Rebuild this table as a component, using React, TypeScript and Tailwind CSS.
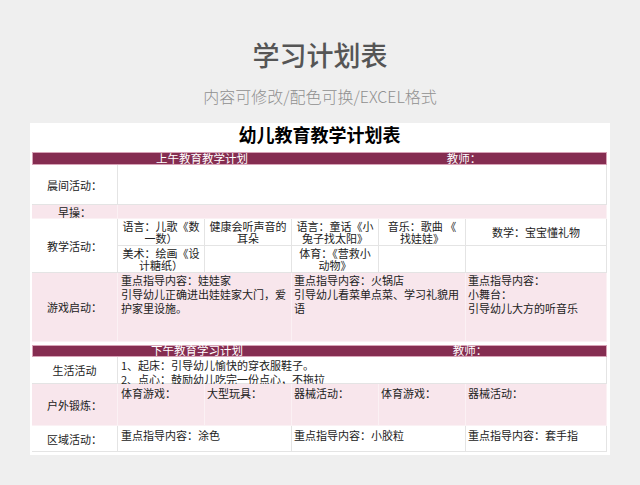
import React from 'react';

const font = { fontFamily: '"Noto Sans CJK SC", "Noto Sans", sans-serif' };

const pink = 'bg-[#f8e6ec] border-[#fbf1f4]';
const white = 'bg-white border-[#e4e4e4]';

function Cell({
  className = '',
  tone = 'white',
  children,
}: {
  className?: string;
  tone?: 'white' | 'pink';
  children?: React.ReactNode;
}) {
  return (
    <div className={`border-r border-b ${tone === 'pink' ? pink : white} ${className}`}>
      {children}
    </div>
  );
}

function Label({ text, tone = 'white', className = '' }: { text: string; tone?: 'white' | 'pink'; className?: string }) {
  return (
    <Cell tone={tone} className={`flex items-center justify-center ${className}`}>
      <span>{text}</span>
    </Cell>
  );
}

function Lines({ lines, className = '' }: { lines: string[]; className?: string }) {
  return (
    <div className={className}>
      {lines.map((l, i) => (
        <div key={i} className="whitespace-nowrap">
          {l}
        </div>
      ))}
    </div>
  );
}

function HeaderBar({ left, leftW, rightW }: { left: string; leftW: string; rightW: string }) {
  return (
    <div className="flex h-full items-center bg-[#852d51] border border-[#d7a3b7] text-white text-[11.5px] leading-none">
      <div className={`${leftW} text-center`}>{left}</div>
      <div className={`${rightW} text-center`}>教师：</div>
    </div>
  );
}

export default function App() {
  const cols = 'grid grid-cols-[86px_87px_87px_87px_87px_141px]';
  return (
    <div className="min-h-[485px] bg-[#efefef] flex flex-col items-center" style={font}>
      <h1 className="mt-[40px] text-[27px] leading-[30px] font-medium text-[#555555]">学习计划表</h1>
      <p className="mt-[16px] text-[16px] leading-[20px] font-light text-[#8f8f8f]">内容可修改/配色可换/EXCEL格式</p>

      <div className="mt-[17px] w-[580px] bg-white pl-[2px] pr-[3px] pb-[3px] text-[11px] text-[#222222]">
        <div className="h-[29px] text-center text-[18px] leading-[22px] font-bold text-black">幼儿教育教学计划表</div>

        <div className="h-[13px]">
          <HeaderBar left="上午教育教学计划" leftW="w-[338px]" rightW="w-[186px]" />
        </div>

        <div className={`${cols} grid-rows-[40px_14px_27px_27px_69px] leading-[12px]`}>
          <Label text="晨间活动：" />
          <Cell className="col-span-5" />

          <Label text="早操：" tone="pink" />
          <Cell tone="pink" className="col-span-5" />

          <Label text="教学活动：" className="row-span-2" />
          <Cell className="flex items-center justify-center text-center">
            <Lines lines={['语言：儿歌《数', '一数）']} />
          </Cell>
          <Cell className="flex items-center justify-center text-center">
            <Lines lines={['健康会听声音的', '耳朵']} />
          </Cell>
          <Cell className="flex items-center justify-center text-center">
            <Lines lines={['语言：童话《小', '兔子找太阳》']} />
          </Cell>
          <Cell className="flex items-center justify-center text-center">
            <Lines lines={['音乐：歌曲 《', '找娃娃》']} />
          </Cell>
          <Cell className="flex items-center justify-center text-center">
            <Lines lines={['数学：宝宝懂礼物']} />
          </Cell>

          <Cell className="flex items-center justify-center text-center">
            <Lines lines={['美术：绘画《设', '计糖纸）']} />
          </Cell>
          <Cell />
          <Cell className="flex items-center justify-center text-center">
            <Lines lines={['体育：《营救小', '动物》']} />
          </Cell>
          <Cell />
          <Cell />

          <Label text="游戏启动：" tone="pink" />
          <Cell tone="pink" className="col-span-2 pl-[3px] leading-[14px]">
            <Lines lines={['重点指导内容：娃娃家', '引导幼儿正确进出娃娃家大门，爱', '护家里设施。']} />
          </Cell>
          <Cell tone="pink" className="col-span-2 pl-[2px] leading-[14px]">
            <Lines lines={['重点指导内容：火锅店', '引导幼儿看菜单点菜、学习礼貌用', '语']} />
          </Cell>
          <Cell tone="pink" className="pl-[2px] leading-[14px]">
            <Lines lines={['重点指导内容：', '小舞台：', '引导幼儿大方的听音乐']} />
          </Cell>
        </div>

        <div className="h-[3px]" />

        <div className="h-[12px]">
          <HeaderBar left="下午教育学习计划" leftW="w-[328px]" rightW="w-[218px]" />
        </div>

        <div className={`${cols} grid-rows-[27px_42px_26px] leading-[14px]`}>
          <Label text="生活活动" />
          <Cell className="col-span-5 pl-[3px] pt-px">
            <Lines lines={['1、起床：引导幼儿愉快的穿衣服鞋子。', '2、点心：鼓励幼儿吃完一份点心，不拖拉']} />
          </Cell>

          <Label text="户外锻炼：" tone="pink" />
          <Cell tone="pink" className="pl-[3px] pt-[2px]">体育游戏：</Cell>
          <Cell tone="pink" className="pl-[2px] pt-[2px]">大型玩具：</Cell>
          <Cell tone="pink" className="pl-[2px] pt-[2px]">器械活动：</Cell>
          <Cell tone="pink" className="pl-[2px] pt-[2px]">体育游戏：</Cell>
          <Cell tone="pink" className="pl-[2px] pt-[2px]">器械活动：</Cell>

          <Label text="区域活动：" />
          <Cell className="col-span-2 pl-[3px] pt-[2px]">重点指导内容：涂色</Cell>
          <Cell className="col-span-2 pl-[2px] pt-[2px]">重点指导内容：小胶粒</Cell>
          <Cell className="pl-[2px] pt-[2px]">重点指导内容：套手指</Cell>
        </div>
      </div>
    </div>
  );
}
